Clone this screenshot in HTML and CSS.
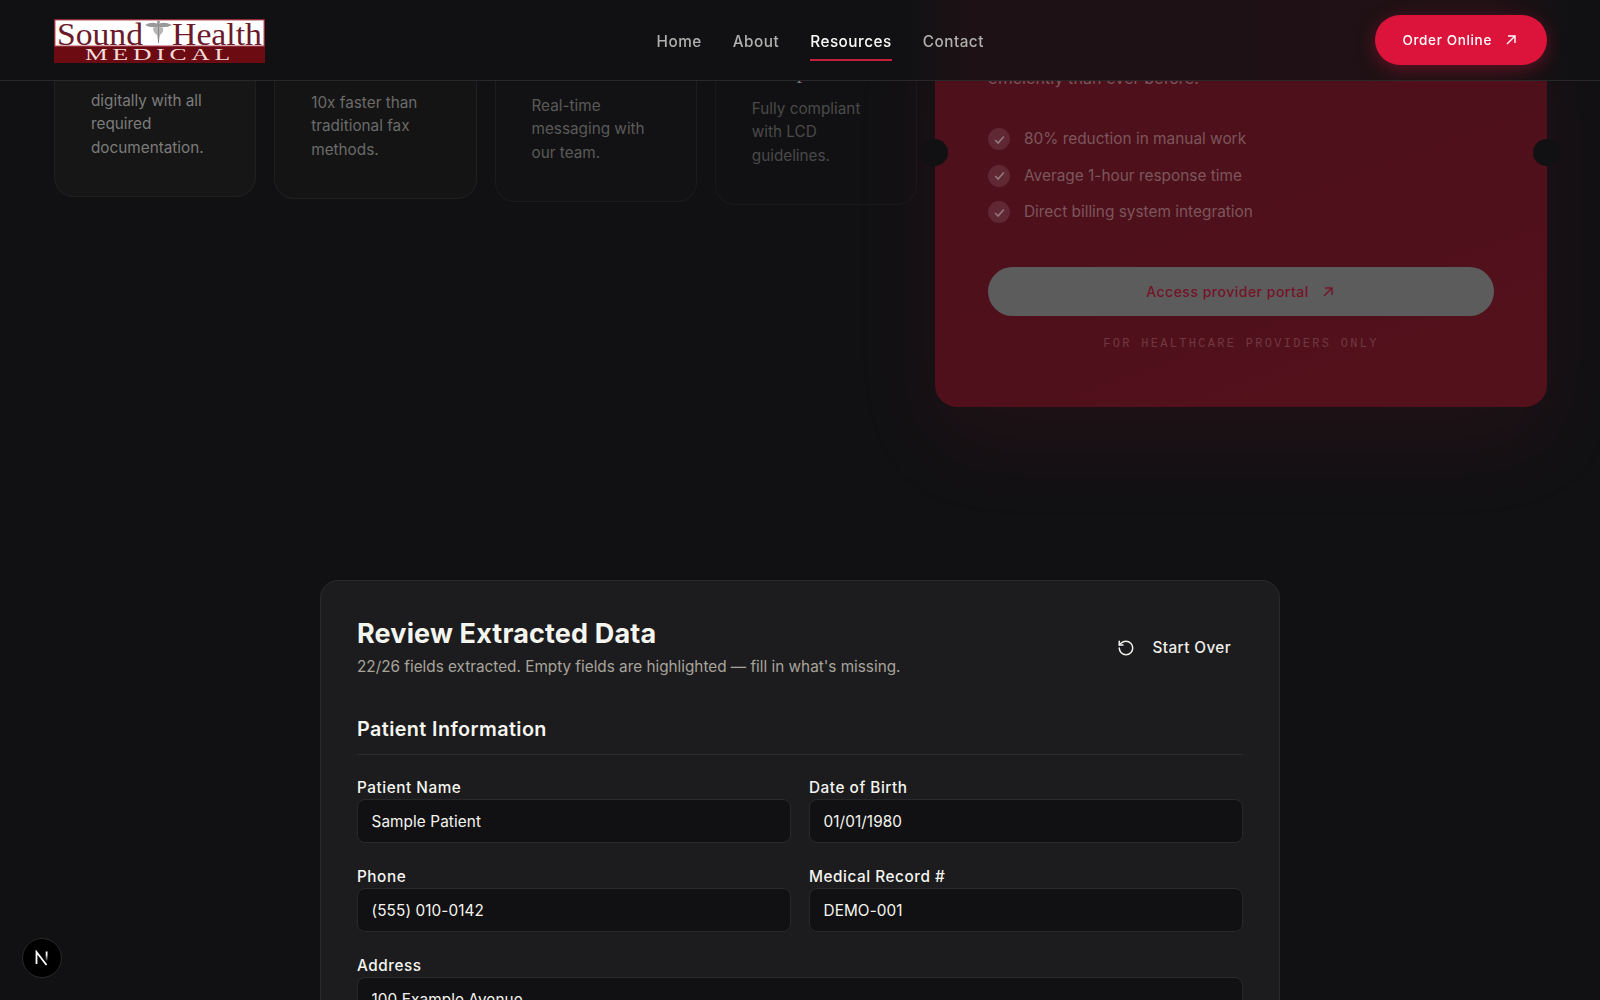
FILE: index.html
```html
<!DOCTYPE html>
<html lang="en">

<head>
    <meta charset="UTF-8">
    <meta name="viewport" content="width=device-width, initial-scale=1.0">
    <title>Sound Health Medical - Resources</title>
    <link rel="stylesheet" href="styles.css">
</head>

<body>
    <!-- Header -->
    <header class="header">
        <a class="logo" href="#">
            <svg width="211" height="44" viewBox="0 0 211 44">
                <rect width="211" height="44" fill="#6d0b13" />
                <rect x="1" y="1" width="209" height="26" fill="#fff" stroke="#b0505c" stroke-width="1" />
                <g class="logo-name">
                    <text x="3" y="25.5" textLength="86" lengthAdjust="spacingAndGlyphs">Sound</text>
                    <text x="118" y="25.5" textLength="90" lengthAdjust="spacingAndGlyphs">Health</text>
                </g>
                <g fill="#999">
                    <path d="M91 6q6-3.5 12-1.500q1-2 2 0q6-2 13 1.500q-5 3-12 2h-3q-7 1-12-2z" />
                    <path d="M99 9q5-3 10 0q1 4-3 7l-1.500 9l-1.500-9q-4-3-4-7z" fill="#b5b5b5" />
                    <path d="M104.500 3v21" stroke="#8a8a8a" stroke-width="1" />
                    <circle cx="104.500" cy="3" r="1.500" />
                </g>
                <text class="logo-sub" x="31" y="41" textLength="150" lengthAdjust="spacingAndGlyphs">MEDICAL</text>
            </svg>
        </a>
        <nav class="nav">
            <a href="#">Home</a>
            <a href="#">About</a>
            <a class="active" href="#">Resources</a>
            <a href="#">Contact</a>
        </nav>
        <a class="order" href="#">
            Order Online
            <svg class="arrow" viewBox="0 0 10 10"><path d="M1 9L9 1M2 1h7v7" /></svg>
        </a>
    </header>

    <main>
        <!-- Features -->
        <section class="features">
            <div class="cards">
                <article class="card one">
                    <p>digitally with all required documentation.</p>
                </article>
                <article class="card two">
                    <p>10x faster than traditional fax methods.</p>
                </article>
                <article class="card three">
                    <p>Real-time messaging with our team.</p>
                </article>
                <article class="card four">
                    <h3>Compliance</h3>
                    <p>Fully compliant with LCD guidelines.</p>
                </article>
            </div>
            <aside class="portal">
                <p class="lead">efficiently than ever before.</p>
                <ul>
                    <li><span class="check"><svg viewBox="0 0 12 12"><path d="M2 6.500l2.700 2.700L10 3.200" /></svg></span>80% reduction in manual work</li>
                    <li><span class="check"><svg viewBox="0 0 12 12"><path d="M2 6.500l2.700 2.700L10 3.200" /></svg></span>Average 1-hour response time</li>
                    <li><span class="check"><svg viewBox="0 0 12 12"><path d="M2 6.500l2.700 2.700L10 3.200" /></svg></span>Direct billing system integration</li>
                </ul>
                <a class="access" href="#">
                    Access provider portal
                    <svg class="arrow" viewBox="0 0 10 10"><path d="M1 9L9 1M2 1h7v7" /></svg>
                </a>
                <small>FOR HEALTHCARE PROVIDERS ONLY</small>
            </aside>
        </section>

        <!-- Review form -->
        <form class="review">
            <div class="review-head">
                <div>
                    <h2>Review Extracted Data</h2>
                    <p>22/26 fields extracted. Empty fields are highlighted — fill in what's missing.</p>
                </div>
                <button class="restart" type="button">
                    <svg viewBox="0 0 24 24"><path d="M3 12a9 9 0 1 0 9-9 9.750 9.750 0 0 0-6.740 2.740L3 8" /><path d="M3 3v5h5" /></svg>
                    Start Over
                </button>
            </div>
            <h3>Patient Information</h3>
            <div class="fields">
                <label>Patient Name <input value="Sample Patient"></label>
                <label>Date of Birth <input value="01/01/1980"></label>
                <label>Phone <input value="(555) 010-0142"></label>
                <label>Medical Record # <input value="DEMO-001"></label>
                <label class="wide">Address <input value="100 Example Avenue"></label>
            </div>
        </form>
    </main>

    <!-- Dev badge -->
    <div class="badge">
        <svg width="14" height="16" viewBox="0 0 14 16">
            <defs>
                <linearGradient id="fade" x1="0" y1="0" x2="0" y2="1">
                    <stop offset="0.300" stop-color="#fff" />
                    <stop offset="1" stop-color="#fff" stop-opacity="0" />
                </linearGradient>
            </defs>
            <path d="M1.500 14V2L11.500 15" fill="none" stroke="#fff" stroke-width="1.800" />
            <rect x="10.700" y="1.500" width="1.800" height="10" fill="url(#fade)" />
        </svg>
    </div>
</body>

</html>
```

FILE: styles.css
```css
* {
    box-sizing: border-box;
}

html {
    font-size: 18px;
}

body {
    margin: 0;
    height: 1000px;
    overflow: hidden;
    background-color: #111113;
    color: #f5f5f0;
    font-family: Inter, sans-serif;
}

h2,
h3,
p,
ul {
    margin: 0;
    padding: 0;
}

a {
    color: inherit;
    text-decoration: none;
}

svg {
    display: block;
}

/* header */
.header {
    position: fixed;
    top: 0;
    left: 0;
    right: 0;
    z-index: 10;
    display: flex;
    justify-content: space-between;
    align-items: center;
    height: 81px;
    padding: 0 53px 0 54px;
    background: linear-gradient(90deg, #111113 910px, #1e1115 970px, #1f1115 1490px, #111113 1570px);
    border-bottom: 1px solid #28282a;
}

.logo svg {
    margin-top: 1px;
    overflow: visible;
}

.logo-name {
    font-family: "Liberation Serif", serif;
    font-size: 31px;
    fill: #6b1a2b;
}

.logo-sub {
    font-family: "Liberation Serif", serif;
    font-size: 16px;
    letter-spacing: 3px;
    fill: #f3dcdc;
}

.nav {
    display: flex;
    gap: 31px;
    font-size: 15.3px;
    font-weight: 500;
    letter-spacing: 0.5px;
    color: #b0b0ae;
}

.nav a {
    padding: 11px 0 5px;
    border-bottom: 2px solid transparent;
    line-height: 24px;
}

.nav .active {
    color: #fafaf7;
    border-color: #c41e3a;
}

.order {
    display: flex;
    align-items: center;
    gap: 14px;
    height: 50px;
    padding: 0 31px 0 27px;
    border-radius: 25px;
    background-color: #dc143c;
    box-shadow: 0 4px 18px rgba(220, 20, 60, 0.35);
    color: #fff;
    font-size: 13.5px;
    font-weight: 500;
    letter-spacing: 0.65px;
}

.arrow {
    width: 10px;
    height: 10px;
    fill: none;
    stroke: currentColor;
    stroke-width: 1.4;
}

/* features */
.features {
    display: flex;
    gap: 18px;
    height: 580px;
    padding: 0 53px 0 54px;
}

.cards {
    display: grid;
    grid-template-columns: repeat(4, 1fr);
    gap: 18px;
    align-items: start;
    width: 863px;
}

.card {
    display: flex;
    flex-direction: column;
    justify-content: flex-end;
    padding: 0 36px 36px;
    border: 1px solid #202021;
    border-top: none;
    border-radius: 0 0 20px 20px;
    font-size: 15.3px;
    line-height: 23.8px;
}

.card h3 {
    margin-bottom: 11px;
    font-family: "Liberation Serif", serif;
    font-size: 23px;
    font-weight: 400;
    line-height: 30px;
    color: #777;
}

.one {
    height: 197px;
    background-color: #161616;
    color: #7c7c7b;
}

.two {
    height: 199px;
    background-color: #141415;
    color: #6b6b6a;
}

.three {
    height: 202px;
    border-color: #1c1c1d;
    background-color: #121214;
    color: #5a5a59;
}

.four {
    height: 205px;
    border-color: #19191a;
    color: #4a4a49;
}

.portal {
    position: relative;
    display: flex;
    flex-direction: column;
    width: 612px;
    height: 407px;
    padding: 67px 53px 0;
    border-radius: 0 0 22px 22px;
    background: linear-gradient(160deg, #4e101b 50%, #54111b);
    box-shadow: 0 36px 90px rgba(220, 20, 60, 0.08);
    color: #7c565c;
}

/* ticket notches */
.portal::before,
.portal::after {
    content: "";
    position: absolute;
    top: 139px;
    width: 27px;
    height: 27px;
    border-radius: 50%;
    background-color: #111113;
}

.portal::before {
    left: -14px;
}

.portal::after {
    right: -13px;
}

.portal .lead {
    margin-top: -1px;
    font-size: 16px;
    line-height: 24px;
    letter-spacing: 0.1px;
}

.portal ul {
    display: flex;
    flex-direction: column;
    gap: 14.5px;
    margin-top: 38px;
    list-style: none;
}

.portal li {
    display: flex;
    align-items: center;
    gap: 14px;
    font-size: 15.4px;
    line-height: 22px;
}

.check {
    display: grid;
    place-items: center;
    width: 22px;
    height: 22px;
    border-radius: 50%;
    background-color: #5f2832;
}

.check svg {
    width: 13px;
    fill: none;
    stroke: #94777b;
    stroke-width: 1.5;
}

.access {
    display: flex;
    align-items: center;
    justify-content: center;
    gap: 14px;
    height: 49px;
    margin-top: 44px;
    padding-right: 3px;
    border-radius: 25px;
    background-color: #5c5c5c;
    color: #751429;
    font-size: 14px;
    font-weight: 500;
    letter-spacing: 0.5px;
}

.portal small {
    margin-top: 21px;
    font-family: "Liberation Mono", monospace;
    font-size: 12px;
    line-height: 14px;
    letter-spacing: 2.3px;
    text-align: center;
    color: #703842;
}

/* review form */
.review {
    width: 960px;
    height: 480px;
    margin: 0 auto;
    padding: 35px 36px;
    border: 1px solid #2a2a2c;
    border-radius: 18px;
    background-color: #1c1c1e;
}

.review-head {
    display: flex;
    justify-content: space-between;
    align-items: center;
}

.review h2 {
    font-size: 27px;
    font-weight: 700;
    line-height: 36px;
    letter-spacing: 0.15px;
}

.review-head p {
    margin-top: 3px;
    font-size: 15.3px;
    line-height: 24px;
    color: #a8a49c;
}

.restart {
    display: flex;
    align-items: center;
    gap: 18px;
    padding: 9px 12px;
    border: none;
    background: none;
    color: #f0f0eb;
    font: 500 15.3px Inter, sans-serif;
    letter-spacing: 0.4px;
}

.restart svg {
    width: 18px;
    height: 18px;
    fill: none;
    stroke: currentColor;
    stroke-width: 2;
    stroke-linecap: round;
    stroke-linejoin: round;
}

.review h3 {
    margin-top: 35px;
    padding-bottom: 10px;
    border-bottom: 1px solid #2c2c2e;
    font-size: 19.8px;
    font-weight: 600;
    line-height: 30px;
    letter-spacing: 0.4px;
}

.fields {
    display: grid;
    grid-template-columns: 1fr 1fr;
    gap: 22px 18px;
    margin-top: 21px;
}

.fields label {
    font-size: 15.3px;
    font-weight: 500;
    line-height: 23px;
    letter-spacing: 0.55px;
}

.fields input {
    display: block;
    width: 100%;
    height: 44px;
    padding: 0 13.5px;
    border: 1px solid #29292b;
    border-radius: 8px;
    background-color: #111113;
    color: #f5f5f0;
    font: 400 15.3px Inter, sans-serif;
    letter-spacing: 0.1px;
}

.wide {
    grid-column: 1 / -1;
}

.badge {
    position: fixed;
    left: 22px;
    bottom: 22px;
    display: grid;
    place-items: center;
    width: 40px;
    height: 40px;
    border: 1px solid #2a2a2a;
    border-radius: 50%;
    background-color: #000;
}
```
